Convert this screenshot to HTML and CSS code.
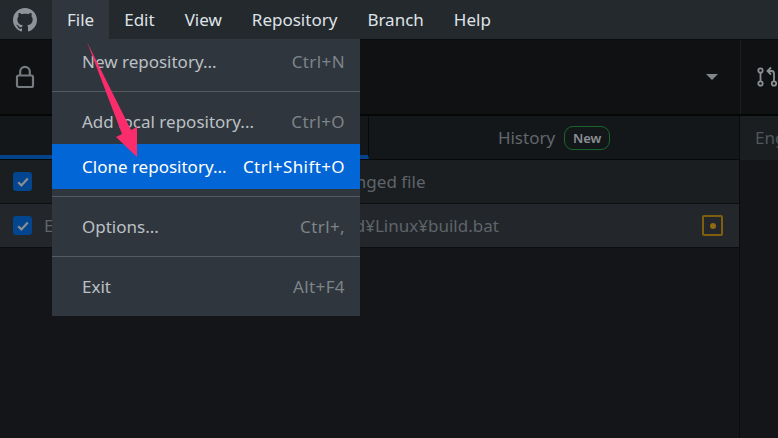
FILE: index.html
```html
<!DOCTYPE html>
<html lang="en">
<head>
    <meta charset="UTF-8">
    <title>GitHub Desktop</title>
    <link rel="stylesheet" href="styles.css">
</head>

<body>
    <header class="titlebar">
        <div class="logo">
            <svg width="24" height="24" viewBox="0 0 16 16"><path fill="#8d9399" d="M8 0C3.58 0 0 3.58 0 8c0 3.54 2.29 6.53 5.47 7.59.4.07.55-.17.55-.38 0-.19-.01-.82-.01-1.49-2.01.37-2.53-.49-2.69-.94-.09-.23-.48-.94-.82-1.13-.28-.15-.68-.52-.01-.53.63-.01 1.08.58 1.23.82.72 1.21 1.87.87 2.33.66.07-.52.28-.87.51-1.07-1.78-.2-3.64-.89-3.64-3.95 0-.87.31-1.59.82-2.15-.08-.2-.36-1.02.08-2.12 0 0 .67-.21 2.2.82.64-.18 1.32-.27 2-.27.68 0 1.36.09 2 .27 1.53-1.04 2.2-.82 2.2-.82.44 1.1.16 1.92.08 2.12.51.56.82 1.27.82 2.15 0 3.07-1.87 3.75-3.65 3.95.29.25.54.73.54 1.48 0 1.07-.01 1.93-.01 2.2 0 .21.15.46.55.38A8.013 8.013 0 0016 8c0-4.42-3.58-8-8-8z"/></svg>
        </div>
        <nav class="menubar">
            <span class="menubar-item open">File</span>
            <span class="menubar-item">Edit</span>
            <span class="menubar-item">View</span>
            <span class="menubar-item">Repository</span>
            <span class="menubar-item">Branch</span>
            <span class="menubar-item">Help</span>
        </nav>
    </header>

    <section class="toolbar">
        <div class="repo-picker">
            <svg class="lock" width="20" height="24" viewBox="0 0 20 24" fill="none" stroke="#767b80" stroke-width="2.2">
                <rect x="2" y="10.5" width="16" height="11.5" rx="1.6"/>
                <path d="M5.2 10.5V6.6a4.8 4.8 0 0 1 9.6 0v3.9"/>
            </svg>
            <span class="caret"></span>
        </div>
        <div class="branch-picker">
            <svg width="37" height="24" viewBox="0 0 37 24" fill="none" stroke="#8a8f94" stroke-width="1.8">
                <circle cx="3.5" cy="5.5" r="2.2"/>
                <circle cx="3.5" cy="18.5" r="2.2"/>
                <path d="M3.5 7.7v8.6"/>
                <circle cx="17" cy="18.5" r="2.2"/>
                <path d="M17 16.3V8.5a2.5 2.5 0 0 0-2.5-2.5h-3"/>
                <path d="M14 2.5L10.5 6l3.5 3.5"/>
            </svg>
        </div>
    </section>

    <main class="content">
        <div class="sidebar">
            <div class="tabs">
                <div class="tab active"></div>
                <div class="tab">History <span class="badge">New</span></div>
            </div>
            <div class="row changes-header">
                <span class="check"><svg width="12" height="10" viewBox="0 0 12 10"><path d="M1.2 5.2L4.4 8.4 10.8 1.6" fill="none" stroke="#8b8f93" stroke-width="2.2"/></svg></span>
                <span class="changes-count">1 changed file</span>
            </div>
            <div class="row file-row">
                <span class="check"><svg width="12" height="10" viewBox="0 0 12 10"><path d="M1.2 5.2L4.4 8.4 10.8 1.6" fill="none" stroke="#8b8f93" stroke-width="2.2"/></svg></span>
                <span class="file-path">Engine¥Extras¥ThirdParty¥Source¥Build¥Linux¥build.bat</span>
                <span class="status-modified"><i></i></span>
            </div>
        </div>
        <div class="diff-pane">
            <div class="diff-header">Engine</div>
        </div>
    </main>

    <div class="menu">
        <div class="menu-item"><span>New repository...</span><span class="shortcut">Ctrl+N</span></div>
        <div class="menu-sep"></div>
        <div class="menu-item"><span>Add local repository...</span><span class="shortcut">Ctrl+O</span></div>
        <div class="menu-item selected"><span>Clone repository...</span><span class="shortcut">Ctrl+Shift+O</span></div>
        <div class="menu-sep"></div>
        <div class="menu-item"><span>Options...</span><span class="shortcut">Ctrl+,</span></div>
        <div class="menu-sep"></div>
        <div class="menu-item"><span>Exit</span><span class="shortcut">Alt+F4</span></div>
    </div>

    <svg class="arrow" width="60" height="120" viewBox="0 0 60 120">
        <path fill="#fb2c6b" d="M2 0L46 88 52 85 52 115 31 95 37 92z"/>
    </svg>
</body>
</html>
```

FILE: styles.css
```css
* {
    box-sizing: border-box;
}

html, body {
    height: 100%;
}

body {
    margin: 0;
    overflow: hidden;
    display: flex;
    flex-direction: column;
    background: #131518;
    font-family: "Noto Sans", "Open Sans", sans-serif;
    font-size: 17px;
    color: #e1e4e8;
}

.titlebar {
    display: flex;
    flex: none;
    height: 40px;
    background: #24292e;
    border-bottom: 1px solid #0b0c0d;
}

.logo {
    display: flex;
    align-items: center;
    justify-content: center;
    width: 52px;
    padding-right: 3px;
}

.menubar {
    display: flex;
}

.menubar-item {
    display: flex;
    align-items: center;
    padding: 0 15px;
    height: 39px;
    color: #dfe3e7;
}

.menubar-item.open {
    background: #2f363d;
}

.toolbar {
    display: flex;
    flex: none;
    height: 76px;
    background: #0f1113;
    border-bottom: 2px solid #050606;
}

.repo-picker {
    display: flex;
    flex: none;
    align-items: center;
    justify-content: space-between;
    width: 741px;
    padding: 0 22px 0 15px;
    border-right: 1px solid #1b1e21;
}

.caret {
    width: 0;
    height: 0;
    border-left: 6px solid transparent;
    border-right: 6px solid transparent;
    border-top: 6px solid #83878b;
}

.branch-picker {
    display: flex;
    align-items: center;
    padding-left: 16px;
}

.content {
    display: flex;
    flex: 1;
    min-height: 0;
}

.sidebar {
    width: 740px;
    flex: none;
    border-right: 1px solid #0a0b0c;
}

.tabs {
    display: flex;
    height: 44px;
    background: #14171a;
    border-bottom: 1px solid #08090a;
}

.tab {
    display: flex;
    flex: 1;
    align-items: center;
    justify-content: center;
    gap: 9px;
    color: #62676d;
}

.tab.active {
    flex: none;
    width: 369px;
    border-right: 1px solid #08090a;
    border-bottom: 4px solid #044289;
}

.badge {
    display: inline-flex;
    align-items: center;
    justify-content: center;
    width: 46px;
    height: 24px;
    border: 1px solid #17652b;
    border-radius: 9px;
    font-size: 13px;
    font-weight: 600;
    color: #8a8f94;
}

.row {
    display: flex;
    align-items: center;
    height: 44px;
    padding: 0 13px;
    border-bottom: 1px solid #0c0d0e;
    color: #5f646a;
}

.changes-header {
    background: #1a1e21;
    justify-content: center;
}

.file-row {
    background: #23272b;
}

.check {
    display: flex;
    flex: none;
    align-items: center;
    justify-content: center;
    width: 19px;
    height: 19px;
    border-radius: 3px;
    background: #03458e;
}

.changes-count {
    flex: 1;
    text-align: center;
    padding-left: 4px;
    padding-right: 23px;
}

.file-path {
    flex: 1;
    margin-left: 12px;
    white-space: nowrap;
}

.status-modified {
    display: flex;
    flex: none;
    align-items: center;
    justify-content: center;
    width: 21px;
    height: 21px;
    margin-right: 3px;
    border: 2px solid #7f5e0d;
    border-radius: 2px;
}

.status-modified i {
    width: 6px;
    height: 6px;
    border-radius: 50%;
    background: #8e6a10;
}

.diff-pane {
    flex: 1;
    min-width: 0;
    overflow: hidden;
}

.diff-header {
    height: 44px;
    line-height: 44px;
    padding-left: 15px;
    background: #1a1e21;
    color: #50565c;
    white-space: nowrap;
}

/* open File menu, sits over the window */
.menu {
    position: absolute;
    left: 52px;
    top: 39px;
    width: 308px;
    padding-bottom: 7px;
    background: #2f363d;
}

.menu-item {
    display: flex;
    align-items: center;
    justify-content: space-between;
    height: 45px;
    padding: 0 15px 0 30px;
    color: #bcc0c5;
}

.menu-item.selected {
    background: #0366d6;
    color: #fff;
}

.shortcut {
    letter-spacing: 0.4px;
    color: #7e848a;
}

.selected .shortcut {
    color: #fff;
}

.menu-sep {
    height: 15px;
    display: flex;
    align-items: center;
}

.menu-sep::after {
    content: "";
    flex: 1;
    height: 1px;
    background: #555b62;
}

.arrow {
    position: absolute;
    left: 85px;
    top: 42px;
}
```
